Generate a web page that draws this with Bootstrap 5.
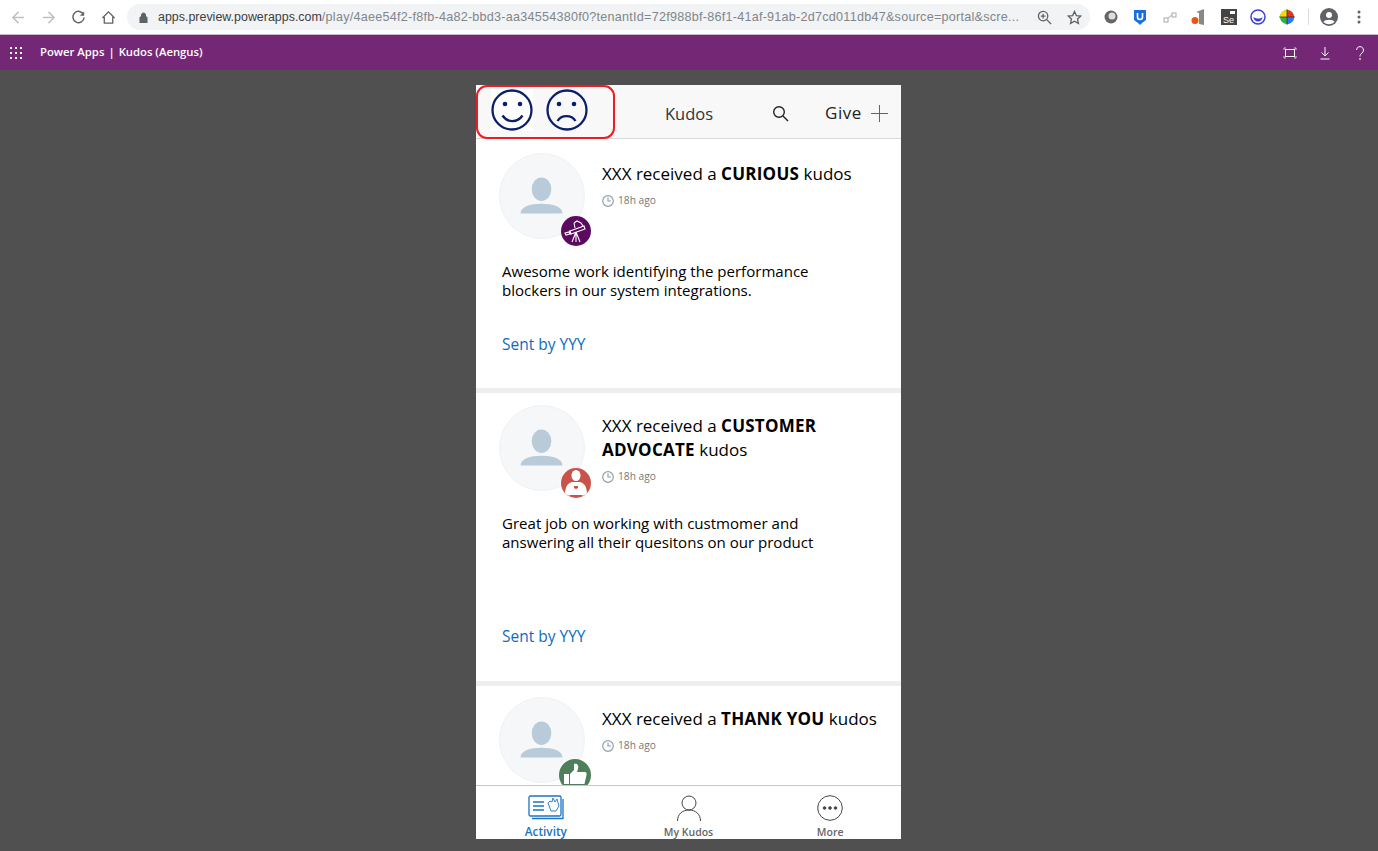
<!DOCTYPE html>
<html lang="en">
<head>
<meta charset="UTF-8">
<title>Kudos</title>
<link href="https://cdn.jsdelivr.net/npm/bootstrap@5.3.0/dist/css/bootstrap.min.css" rel="stylesheet">
<style>
html, body { height: 851px; overflow: hidden; }
body { background: #505050; font-family: "Open Sans", "Noto Sans", sans-serif; color: #000; }
.chrome-bar { height: 35px; background: #fff; border-bottom: 1px solid #c9b8c9; }
.chrome-btns { width: 127px; padding-left: 11px; gap: 15px; }
.url-pill { width: 963px; height: 26px; background: #f1f3f4; border-radius: 13px; padding: 0 0 0 12px; font-family: "Liberation Sans", sans-serif; font-size: 12.6px; color: #80868b; white-space: nowrap; }
.url-host { color: #3c4043; font-size: 12.45px; letter-spacing: 0; }
.url-text { width: 861px; margin-left: 10px; overflow: hidden; letter-spacing: .25px; }
.url-zoom { margin-left: 18px; }
.url-star { margin-left: 15px; }
.ext-row { padding-left: 12px; gap: 11.4px; }
.ext-box { width: 18px; height: 18px; }
.ext-sep { width: 1px; height: 16px; background: #dadce0; }
.ext-dots { margin-left: 7px; }
.pa-bar { height: 35px; background: #742774; color: #fff; font-size: 11.3px; font-weight: 600; padding: 0 11px 0 10px; }
.pa-name { margin-left: 18px; gap: 4px; }
.pa-tools { gap: 21px; }
.app-wrap { padding: 15px 1px 0 0; }
.app-frame { position: relative; width: 425px; height: 754px; background: #fff; }
.app-head { height: 54px; background: #f8f8f8; border-bottom: 1px solid #d8d8d8; padding: 0 13px 0 15px; }
.face-wrap { width: 138px; gap: 13px; align-self: flex-start; margin-top: 4px; }
.face-white { background: #fff; display: block; }
.head-title { width: 143px; font-size: 16.5px; color: #333; margin-top: 6px; padding-left: 36px; }
.head-search { margin-top: 4px; }
.head-give { font-size: 17px; letter-spacing: .6px; color: #222; margin-left: 36px; margin-top: 3px; }
.head-plus { margin: 4px 0 0 9px; }
.red-outline { position: absolute; left: 0; top: 0; width: 139px; height: 54px; border: 2px solid #ed1c24; border-radius: 11px; pointer-events: none; }
.feed-list { height: 646px; overflow: hidden; }
.kudos-item { position: relative; padding: 14px 0 0 23px; border-bottom: 5px solid #eeeeee; }
.h-one { height: 254px; }
.h-two { height: 293px; padding-top: 12px; }
.h-three { padding-top: 11px; }
.person-wrap { position: relative; width: 86px; height: 86px; flex: none; }
.person-circle { width: 86px; height: 86px; border-radius: 50%; background: #f6f7f9; border: 1px solid #f0f1f3; display: block; }
.kudos-badge { position: absolute; left: 62px; top: 63px; width: 30px; height: 30px; border-radius: 50%; display: flex; align-items: center; justify-content: center; overflow: hidden; }
.badge-purple { background: #5c0a5f; }
.badge-red { background: #c9534a; }
.badge-green { background: #4e7f5a; left: 60px; top: 62px; width: 32px; height: 32px; }
.kudos-copy { margin-left: 17px; padding-top: 10px; width: 290px; }
.h-one .kudos-copy, .h-two .kudos-copy { padding-top: 9px; }
.kudos-title { font-size: 17px; line-height: 24px; }
.kudos-title b { font-weight: 700; letter-spacing: .25px; }
.kudos-time { font-size: 10.2px; color: #777; margin-top: 8px; gap: 4px; line-height: 13px; }
.kudos-msg { font-size: 15.05px; line-height: 19px; margin: 23px 0 0 3px; width: 340px; }
.kudos-sent { font-size: 15.5px; color: #0f6cbd; margin-left: 3px; position: absolute; left: 23px; }
.sent-one { top: 194px; }
.sent-two { top: 232px; }
.app-foot { height: 54px; border-top: 1px solid #c8c8c8; background: #fff; }
.foot-tab { width: 142px; font-size: 10.5px; font-weight: 600; color: #666; line-height: 13px; }
.foot-icon { height: 26px; margin-bottom: 5px; }
.foot-active { color: #1b74c5; font-size: 11.8px; line-height: 14px; padding: 0 2px 1px 0; }
.foot-active .foot-icon { margin-bottom: 3px; }
</style>
</head>
<body>
<div class="chrome-bar d-flex align-items-center">
    <div class="chrome-btns d-flex align-items-center">
        <svg width="15" height="15" viewBox="0 0 16 16" fill="none" stroke="#bdc1c6" stroke-width="1.6"><path d="M14 8H2M8 2 2 8l6 6"/></svg>
        <svg width="15" height="15" viewBox="0 0 16 16" fill="none" stroke="#bdc1c6" stroke-width="1.6"><path d="M2 8h12M8 2l6 6-6 6"/></svg>
        <svg width="15" height="15" viewBox="0 0 16 16" fill="none" stroke="#5f6368" stroke-width="1.6"><path d="M13.5 5A6 6 0 1 0 14 8"/><path d="M14 1.500V6H9.500" fill="#5f6368" stroke="none"/></svg>
        <svg width="15" height="15" viewBox="0 0 16 16" fill="none" stroke="#5f6368" stroke-width="1.4"><path d="M1.500 8.500 8 2l6.500 6.500M3.500 7.500V14h9V7.500"/></svg>
    </div>
    <div class="url-pill d-flex align-items-center">
        <svg width="9" height="11" viewBox="0 0 9 11"><path d="M1 5h7v6H1zM2.500 5V3a2 2 0 0 1 4 0v2" fill="#5f6368" stroke="#5f6368"/></svg>
        <div class="url-text"><span class="url-host">apps.preview.powerapps.com</span>/play/4aee54f2-f8fb-4a82-bbd3-aa34554380f0?tenantId=72f988bf-86f1-41af-91ab-2d7cd011db47&amp;source=portal&amp;scre...</div>
        <svg class="url-zoom" width="15" height="15" viewBox="0 0 16 16" fill="none" stroke="#5f6368" stroke-width="1.4"><circle cx="6.500" cy="6.500" r="5"/><path d="M10 10l5 5M4 6.500h5M6.500 4v5"/></svg>
        <svg class="url-star" width="15" height="15" viewBox="0 0 16 16" fill="none" stroke="#5f6368" stroke-width="1.4"><path d="M8 1.500l2 4.400 4.700.5-3.500 3.200 1 4.700L8 11.900l-4.200 2.400 1-4.700L1.300 6.400 6 5.900z"/></svg>
    </div>
    <div class="ext-row d-flex align-items-center">
        <svg class="ext-box" viewBox="0 0 18 18"><circle cx="9" cy="9" r="6.500" fill="#666"/><circle cx="10" cy="8" r="3.500" fill="#ddd"/></svg>
        <svg class="ext-box" viewBox="0 0 18 18"><path d="M3 2h12v10l-4 3-2 2-2-2-4-3z" fill="#1a6fdc"/><path d="M6.500 5v4a2.500 2.500 0 0 0 5 0V5" fill="none" stroke="#fff" stroke-width="1.600"/></svg>
        <svg class="ext-box" viewBox="0 0 18 18" fill="none" stroke="#aaa"><rect x="3" y="10" width="4" height="4"/><rect x="11" y="5" width="4" height="4"/><path d="M7 10l4-3"/></svg>
        <svg class="ext-box" viewBox="0 0 18 18"><path d="M6 4l8-3v16l-5-1V5z" fill="#888"/><circle cx="5" cy="12.500" r="3.500" fill="#ea5514"/></svg>
        <svg class="ext-box" viewBox="0 0 18 18"><rect x="1" y="1" width="16" height="16" fill="#444"/><rect x="10" y="3" width="5" height="3" fill="#fff"/><text x="3" y="15" fill="#fff" font-size="9" font-family="Liberation Sans">Se</text></svg>
        <svg class="ext-box" viewBox="0 0 18 18"><circle cx="9" cy="9" r="7" fill="none" stroke="#3f3fd6" stroke-width="1.500"/><path d="M4.500 9a4.500 4.500 0 0 0 9 0c-2 2-6 2-9 0z" fill="#3f3fd6"/></svg>
        <svg class="ext-box" viewBox="0 0 18 18"><circle cx="9" cy="9" r="7" fill="#2bb24c"/><path d="M9 2a7 7 0 0 1 7 7H9z" fill="#e8332a"/><path d="M9 9h7a7 7 0 0 1-7 7z" fill="#2979ff"/><path d="M2 9a7 7 0 0 1 7-7v7z" fill="#ffd600"/><path d="M9 1v16M1 9h16" stroke="#222" stroke-width=".7"/></svg>
        <div class="ext-sep"></div>
        <svg width="18" height="18" viewBox="0 0 18 18"><circle cx="9" cy="9" r="9" fill="#5f6368"/><circle cx="9" cy="7" r="3" fill="#fff"/><path d="M3.500 14c1-3 10-3 11 0a8 8 0 0 1-11 0z" fill="#fff"/></svg>
        <svg class="ext-dots" width="4" height="14" viewBox="0 0 4 14" fill="#5f6368"><circle cx="2" cy="2" r="1.500"/><circle cx="2" cy="7" r="1.500"/><circle cx="2" cy="12" r="1.500"/></svg>
    </div>
</div>

<div class="pa-bar d-flex align-items-center justify-content-between">
    <div class="d-flex align-items-center">
        <svg width="12" height="12" viewBox="0 0 12 12" fill="#fff"><rect width="2" height="2"/><rect x="5" width="2" height="2"/><rect x="10" width="2" height="2"/><rect y="5" width="2" height="2"/><rect x="5" y="5" width="2" height="2"/><rect x="10" y="5" width="2" height="2"/><rect y="10" width="2" height="2"/><rect x="5" y="10" width="2" height="2"/><rect x="10" y="10" width="2" height="2"/></svg>
        <div class="pa-name d-flex"><span>Power Apps</span><span>|</span><span>Kudos (Aengus)</span></div>
    </div>
    <div class="pa-tools d-flex align-items-center">
        <svg width="14" height="14" viewBox="0 0 14 14" fill="none" stroke="#fff"><rect x="2.500" y="3.500" width="9" height="7"/><path d="M1 2v2M1 2h2M13 2v2M13 2h-2M1 12v-2M1 12h2M13 12v-2M13 12h-2" stroke="#d9c4d9"/></svg>
        <svg width="14" height="14" viewBox="0 0 14 14" fill="none" stroke="#fff"><path d="M7 1v9M3.500 6.500 7 10l3.500-3.500M2.500 13h9"/></svg>
        <svg width="14" height="16" viewBox="0 0 14 16" fill="none" stroke="#fff" stroke-width="1"><path d="M3.500 5a3.500 3.500 0 1 1 5.500 3C7.500 9 7 10 7 11.500"/><circle cx="7" cy="14" r=".5"/></svg>
    </div>
</div>

<div class="app-wrap d-flex justify-content-center">
<div class="app-frame d-flex flex-column">
    <div class="app-head d-flex align-items-center">
        <div class="face-wrap d-flex">
            <svg class="face-white" width="42" height="42" viewBox="0 0 42 42" fill="none" stroke="#0a1f6b" stroke-width="2.300"><circle cx="21" cy="21" r="19.500"/><path d="M11.500 26.500c5 7.500 15 7.500 20 0"/><circle cx="14" cy="15" r="2.300" fill="#0a1f6b" stroke="none"/><circle cx="29" cy="15" r="2.300" fill="#0a1f6b" stroke="none"/></svg>
            <svg width="42" height="42" viewBox="0 0 42 42" fill="none" stroke="#0a1f6b" stroke-width="2.300"><circle cx="21" cy="21" r="19.500"/><path d="M11.500 32c4-6.500 14-6.500 18 0"/><circle cx="13" cy="15" r="2.300" fill="#0a1f6b" stroke="none"/><circle cx="28" cy="15" r="2.300" fill="#0a1f6b" stroke="none"/></svg>
        </div>
        <div class="head-title">Kudos</div>
        <svg class="head-search" width="17" height="17" viewBox="0 0 17 17" fill="none" stroke="#222" stroke-width="1.400"><circle cx="7" cy="7" r="5.300"/><path d="M11 11l5 5"/></svg>
        <div class="head-give">Give</div>
        <svg class="head-plus" width="17" height="17" viewBox="0 0 17 17" fill="none" stroke="#1b74c5" stroke-width="1"><path d="M8.500 0v17M0 8.500h17"/></svg>
    </div>
    <div class="red-outline"></div>
    <div class="feed-list">
        <div class="kudos-item h-one">
            <div class="d-flex">
                <div class="person-wrap">
                    <svg class="person-circle" viewBox="0 0 86 86"><ellipse cx="42.500" cy="36" rx="10" ry="12" fill="#b9cad9"/><path d="M21 61c0-7 10-10 21.500-10S64 54 64 61z" fill="#b9cad9"/></svg>
                    <div class="kudos-badge badge-purple"><svg width="26" height="26" viewBox="0 0 26 26" fill="none" stroke="#fff" stroke-width="1.100"><path d="M2 15l4-1 1 2-4 1zM7 13l14-5 1 3-14 5zM13 14l-4 10M13 14v10M13 14l4 10M11 5l3-2 4 2 2 3M11 5l1 5M6 13h1"/></svg></div>
                </div>
                <div class="kudos-copy">
                    <div class="kudos-title">XXX received a <b>CURIOUS</b> kudos</div>
                    <div class="kudos-time d-flex align-items-center"><svg width="12" height="12" viewBox="0 0 12 12" fill="none" stroke="#93a0ad" stroke-width="1.200"><circle cx="6" cy="6" r="5.300"/><path d="M6 2.500V6h3"/></svg>18h ago</div>
                </div>
            </div>
            <div class="kudos-msg">Awesome work identifying the performance blockers in our system integrations.</div>
            <div class="kudos-sent sent-one">Sent by YYY</div>
        </div>
        <div class="kudos-item h-two">
            <div class="d-flex">
                <div class="person-wrap">
                    <svg class="person-circle" viewBox="0 0 86 86"><ellipse cx="42.500" cy="36" rx="10" ry="12" fill="#b9cad9"/><path d="M21 61c0-7 10-10 21.500-10S64 54 64 61z" fill="#b9cad9"/></svg>
                    <div class="kudos-badge badge-red"><svg width="30" height="30" viewBox="0 0 30 30" fill="#fff"><ellipse cx="15" cy="7.500" rx="4.500" ry="5.500"/><path d="M4 27c0-9 3-12 7-13h8c4 1 7 4 7 13z"/><path d="M13 18h4v2l-2 1-2-1z" fill="#c9534a"/><path d="M8 27v3M22 27v3" stroke="#fff"/></svg></div>
                </div>
                <div class="kudos-copy">
                    <div class="kudos-title">XXX received a <b>CUSTOMER</b> <b>ADVOCATE</b> kudos</div>
                    <div class="kudos-time d-flex align-items-center"><svg width="12" height="12" viewBox="0 0 12 12" fill="none" stroke="#93a0ad" stroke-width="1.200"><circle cx="6" cy="6" r="5.300"/><path d="M6 2.500V6h3"/></svg>18h ago</div>
                </div>
            </div>
            <div class="kudos-msg">Great job on working with custmomer and answering all their quesitons on our product</div>
            <div class="kudos-sent sent-two">Sent by YYY</div>
        </div>
        <div class="kudos-item h-three border-0">
            <div class="d-flex">
                <div class="person-wrap">
                    <svg class="person-circle" viewBox="0 0 86 86"><ellipse cx="42.500" cy="36" rx="10" ry="12" fill="#b9cad9"/><path d="M21 61c0-7 10-10 21.500-10S64 54 64 61z" fill="#b9cad9"/></svg>
                    <div class="kudos-badge badge-green"><svg width="24" height="24" viewBox="0 0 24 24" fill="#fff"><path d="M1 11h5v10H1zM7 11l4-4V1c3-1 5 1 4 5l-1 3h8c1 0 2 1 1.500 3l-2 9H7z"/></svg></div>
                </div>
                <div class="kudos-copy">
                    <div class="kudos-title">XXX received a <b>THANK YOU</b> kudos</div>
                    <div class="kudos-time d-flex align-items-center"><svg width="12" height="12" viewBox="0 0 12 12" fill="none" stroke="#93a0ad" stroke-width="1.200"><circle cx="6" cy="6" r="5.300"/><path d="M6 2.500V6h3"/></svg>18h ago</div>
                </div>
            </div>
        </div>
    </div>
    <div class="app-foot d-flex justify-content-center">
        <div class="foot-tab foot-active d-flex flex-column align-items-center justify-content-end">
            <svg class="foot-icon" width="36" height="26" viewBox="0 0 36 26" fill="none" stroke="#1b74c5" stroke-width="1.300"><rect x="1" y="1" width="32" height="20" rx="1.500"/><path d="M35 4v19.500H4"/><path d="M5 7h11M5 11h11M5 15h11" stroke-width="1.700"/><path d="M20 8l3 8h5l3-5-2-7-2 3-2-4-1 4-2-1z" stroke-width=".9"/></svg>
            Activity
        </div>
        <div class="foot-tab d-flex flex-column align-items-center justify-content-end">
            <svg class="foot-icon" width="24" height="26" viewBox="0 0 24 26" fill="none" stroke="#444" stroke-width="1"><circle cx="12" cy="8" r="7"/><path d="M.5 26c0-7 5-11 11.500-11s11.500 4 11.500 11"/></svg>
            My Kudos
        </div>
        <div class="foot-tab d-flex flex-column align-items-center justify-content-end">
            <svg class="foot-icon" width="26" height="26" viewBox="0 0 26 26" fill="none" stroke="#444" stroke-width="1"><circle cx="13" cy="13" r="12.300"/><circle cx="7.500" cy="13" r="1.300" fill="#444"/><circle cx="13" cy="13" r="1.300" fill="#444"/><circle cx="18.500" cy="13" r="1.300" fill="#444"/></svg>
            More
        </div>
    </div>
</div>
</div>
<script src="https://cdn.jsdelivr.net/npm/bootstrap@5.3.0/dist/js/bootstrap.bundle.min.js"></script>
</body>
</html>
